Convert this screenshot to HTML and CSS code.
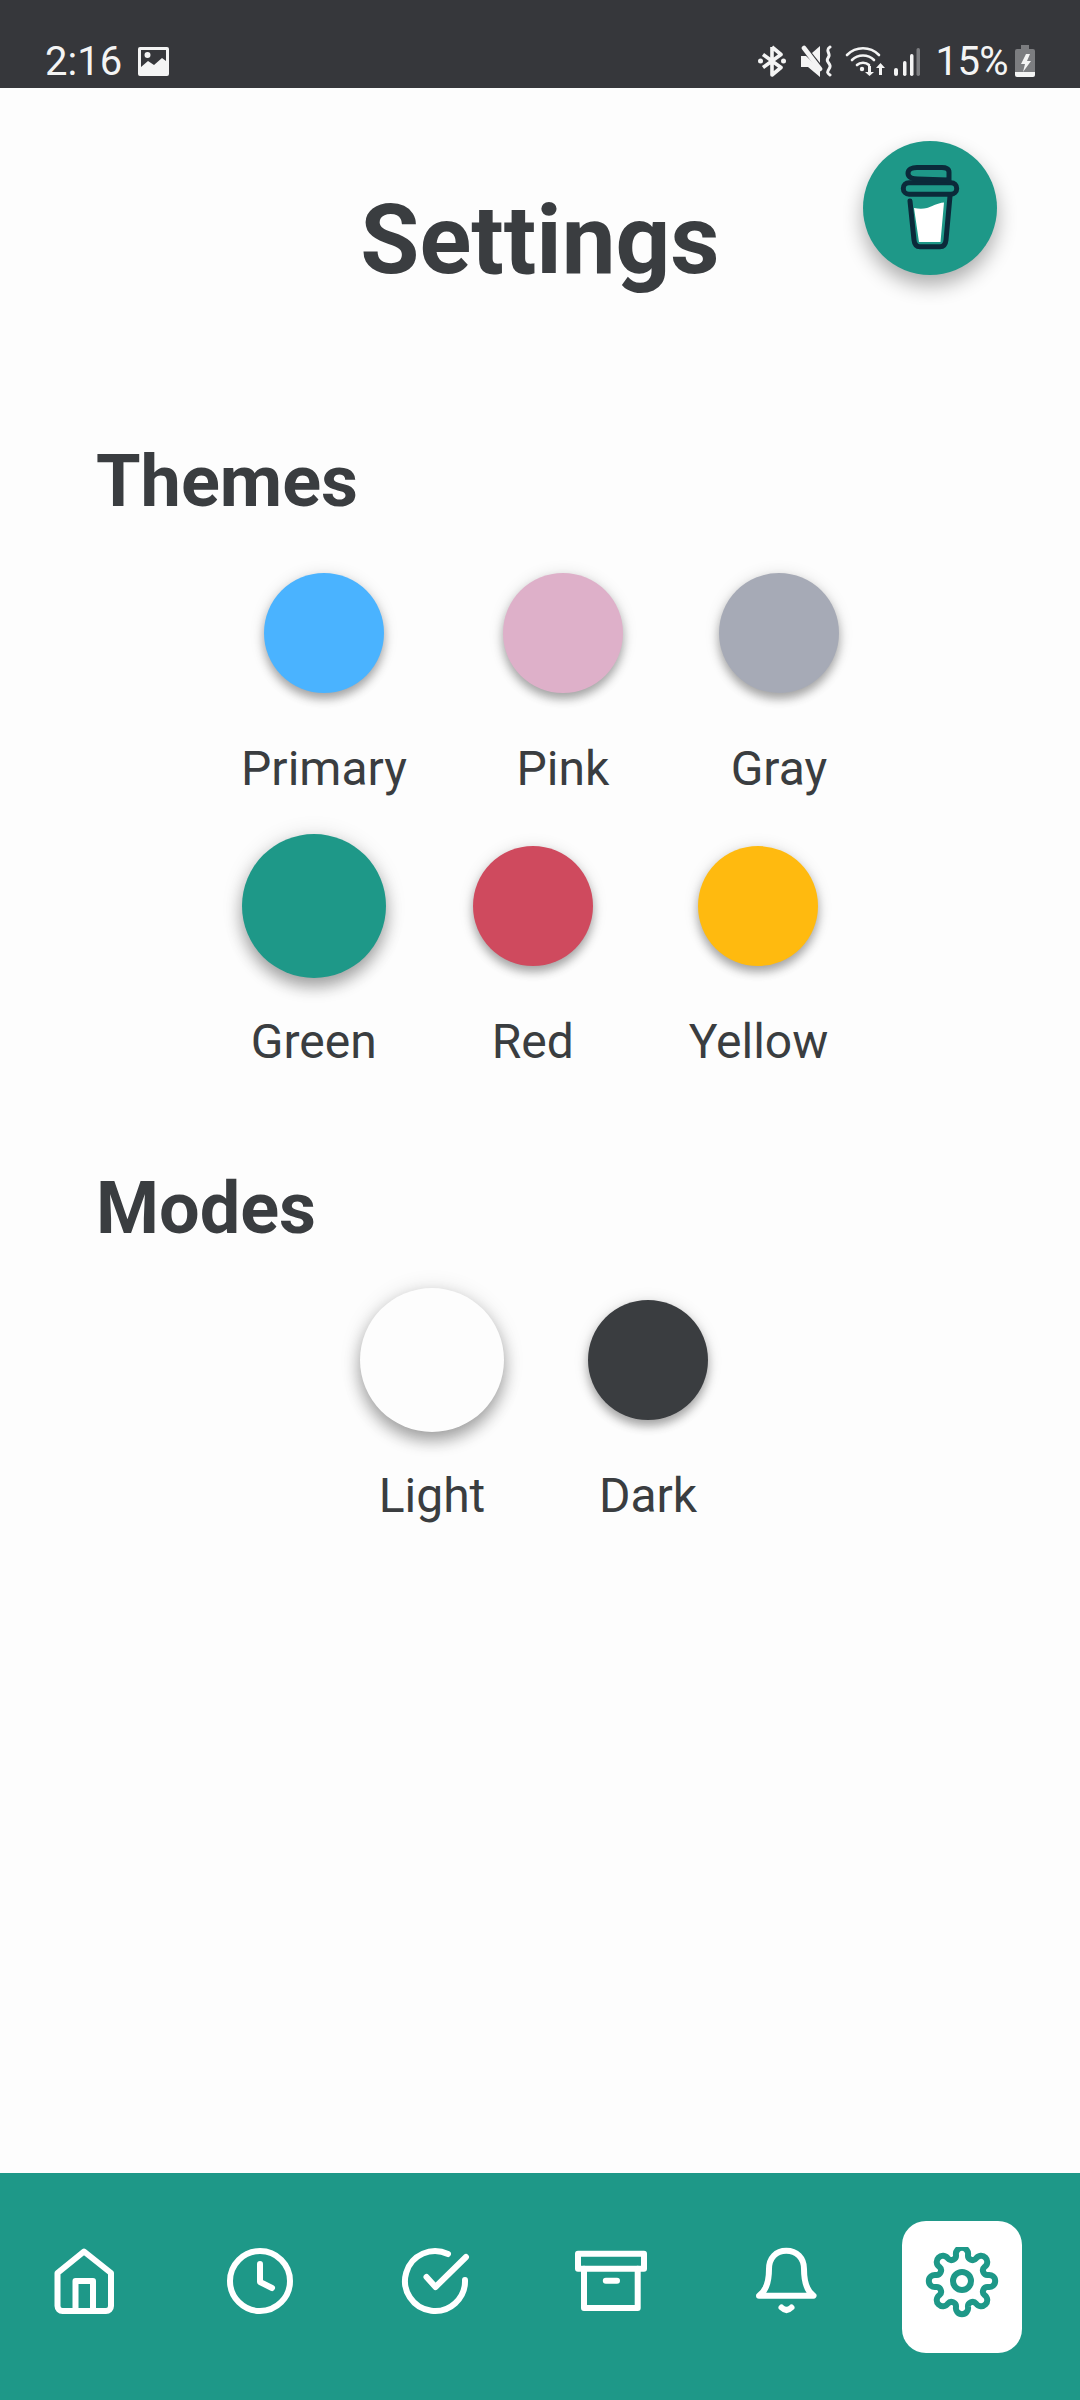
FILE: index.html
```html
<!DOCTYPE html>
<html lang="en">
<head>
<meta charset="utf-8">
<title>Settings</title>
<link rel="stylesheet" href="styles.css">
</head>
<body>
<div class="app">
  <header class="status">
    <div class="status-left">
      <span class="clock">2:16</span>
      <svg class="st-img" viewBox="0 0 31 29"><path fill="#f4f4f4" fill-rule="evenodd" d="M2 0h27a2 2 0 0 1 2 2v25a2 2 0 0 1-2 2H2a2 2 0 0 1-2-2V2a2 2 0 0 1 2-2zM3 3v17l7-6 6 4 8-7 4 3V3zM9.500 5a3 3 0 1 1 0 6 3 3 0 0 1 0-6z"/></svg>
    </div>
    <div class="status-right">
      <svg class="st-bt" viewBox="0 0 28 32"><path fill="none" stroke="#f4f4f4" stroke-width="3.6" stroke-linejoin="round" d="M14 2v28l9-7.500L5 9.500M14 2l9 7.500L5 22.500"/><circle cx="2.500" cy="16" r="2.500" fill="#f4f4f4"/><circle cx="25.500" cy="16" r="2.500" fill="#f4f4f4"/></svg>
      <svg class="st-mute" viewBox="0 0 31 32"><path fill="#f4f4f4" d="M0 11h5l14 13v8L7 22H0z"/><path fill="#f4f4f4" d="M11 8l8-7v17z"/><path fill="none" stroke="#f4f4f4" stroke-width="4.600" stroke-linecap="round" d="M3 3l16 21"/><path fill="none" stroke="#f4f4f4" stroke-width="3" stroke-linecap="round" d="M29 2c-5 3 0 6-1 9s-3 3-1 6 3 4 1 7-2 4 1 6"/></svg>
      <svg class="st-wifi" viewBox="0 0 40 30"><g fill="none" stroke="#f4f4f4" stroke-width="2.600" stroke-linecap="round"><path d="M2 9c9-9 23-9 32 0"/><path d="M7 14c6-6 16-6 22 0"/><path d="M12 19c3-3 9-3 12 0"/></g><circle cx="17" cy="23" r="2.200" fill="#f4f4f4"/><path fill="#f4f4f4" d="M23 20h3v6h3l-4.500 4-4.500-4h3zM35.500 17l4.500 5h-3v7h-3v-7h-3z"/></svg>
      <svg class="st-sig" viewBox="0 0 26 28"><rect x="0" y="20" width="4" height="8" rx="2" fill="#f4f4f4"/><rect x="9" y="13" width="3.500" height="15" rx="1.700" fill="#f4f4f4"/><rect x="16" y="6" width="3.500" height="22" rx="1.700" fill="#f4f4f4"/><rect x="22.500" y="0" width="3.500" height="28" rx="1.700" fill="#7c7d80"/></svg>
      <span class="pct">15%</span>
      <svg class="st-bat" viewBox="0 0 20 32"><path fill="#7c7d80" d="M6 0h8v4h4a2 2 0 0 1 2 2v21H0V6a2 2 0 0 1 2-2h4z"/><path fill="#f4f4f4" d="M0 27h20v3a2 2 0 0 1-2 2H2a2 2 0 0 1-2-2z"/><path fill="#f4f4f4" d="M11 9h4l-3 7h4l-8 11 2-8H6z"/></svg>
    </div>
  </header>

  <main class="content">
    <button class="coffee" aria-label="Buy me a coffee">
      <svg viewBox="0 0 134 134" class="cup">
        <path fill="#fff" d="M51 67c5 1 9 1 13 0s10-5 17-5.500L77.500 101H56z"/>
        <path fill="none" stroke="#0b2a3a" stroke-width="5" stroke-linecap="round" stroke-linejoin="round" d="M47 60l4 39c.4 4 2.500 6.700 6 6.700h20c3.500 0 5.600-2.700 6-6.700l4-44"/>
        <rect x="40.300" y="41.700" width="53.400" height="11.500" rx="5.700" fill="none" stroke="#0b2a3a" stroke-width="5"/>
        <path fill="none" stroke="#0b2a3a" stroke-width="5" stroke-linecap="round" stroke-linejoin="round" d="M86 41V31c0-3-3-4.500-7-4.500H54c-5 0-9 2-9 5.700s4 5.800 10 5.800l30 1"/>
      </svg>
    </button>
    <h1 class="title">Settings</h1>

    <section class="section themes">
      <h2 class="heading">Themes</h2>
      <div class="row row-a">
        <div class="swatch"><span class="dot blue"></span><span class="label">Primary</span></div>
        <div class="swatch"><span class="dot pink"></span><span class="label">Pink</span></div>
        <div class="swatch"><span class="dot gray"></span><span class="label">Gray</span></div>
      </div>
      <div class="row row-b">
        <div class="swatch"><span class="dot green big"></span><span class="label">Green</span></div>
        <div class="swatch tight"><span class="dot red"></span><span class="label">Red</span></div>
        <div class="swatch"><span class="dot yellow"></span><span class="label">Yellow</span></div>
      </div>
    </section>

    <section class="section modes">
      <h2 class="heading">Modes</h2>
      <div class="row row-c">
        <div class="swatch"><span class="dot white big"></span><span class="label">Light</span></div>
        <div class="swatch"><span class="dot dark"></span><span class="label">Dark</span></div>
      </div>
    </section>
  </main>

  <nav class="tabs">
    <a class="tab">
      <svg class="ico" viewBox="0 0 80 80"><g class="line"><path d="M13.500 26L40 4.500 67 26v33a5 5 0 0 1-5 5H18.500a5 5 0 0 1-5-5z"/><path d="M31.500 64V34H49v30"/></g></svg>
    </a>
    <a class="tab">
      <svg class="ico" viewBox="0 0 80 80"><g class="line"><circle cx="40" cy="34" r="30"/><path d="M40 17v18l12 6"/></g></svg>
    </a>
    <a class="tab">
      <svg class="ico" viewBox="0 0 80 80"><g class="line"><path d="M53 7A30 30 0 1 0 70 33"/><path d="M31.500 30l9 10L71 10"/></g></svg>
    </a>
    <a class="tab">
      <svg class="ico" viewBox="0 0 80 80"><g class="line"><path d="M7 6.700h66v15H7z"/><path d="M13 21.700V61h53.700V21.700"/><path d="M34.800 33.700H46"/></g></svg>
    </a>
    <a class="tab">
      <svg class="ico" viewBox="0 0 80 80"><g class="line"><path d="M13 48.700C20 44 23 34 23 22 23 11 30 3.700 40.300 3.700S58 11 58 22c0 12 3 22 9.500 26.700z"/><path d="M35.500 60.500q5 5 10 0"/></g></svg>
    </a>
    <a class="tab active">
      <svg class="ico" viewBox="0 0 80 80"><g class="line gear"><circle cx="40" cy="34" r="9"/><path d="M66 28A6.100 6.100 0 1 1 66 40A4.600 4.600 0 0 0 62.630 48.140A6.100 6.100 0 1 1 54.140 56.630A4.600 4.600 0 0 0 46 60A6.100 6.100 0 1 1 34 60A4.600 4.600 0 0 0 25.860 56.630A6.100 6.100 0 1 1 17.370 48.140A4.600 4.600 0 0 0 14 40A6.100 6.100 0 1 1 14 28A4.600 4.600 0 0 0 17.370 19.860A6.100 6.100 0 1 1 25.860 11.370A4.600 4.600 0 0 0 34 8A6.100 6.100 0 1 1 46 8A4.600 4.600 0 0 0 54.140 11.370A6.100 6.100 0 1 1 62.630 19.860A4.600 4.600 0 0 0 66 28z"/></g></svg>
    </a>
  </nav>
</div>
</body>
</html>
```
FILE: styles.css
```css
* { box-sizing: border-box; }
html, body { margin: 0; padding: 0; }
body { font-family: Roboto, "Liberation Sans", sans-serif; background: #fdfdfd; }
.app { width: 1080px; height: 2400px; display: flex; flex-direction: column; overflow: hidden; }

.status { height: 88px; background: #36373b; color: #f4f4f4; display: flex; justify-content: space-between; align-items: flex-end; padding: 0 45px 4px 45px; flex: none; }
.status-left { display: flex; align-items: center; gap: 16px; }
.clock { font-size: 40px; line-height: 44px; font-weight: 400; }
.st-img { width: 31px; height: 29px; margin-top: -2px; }
.status-right { display: flex; align-items: center; }
.st-bt { width: 28px; height: 32px; margin-right: 15px; margin-top: -3px; }
.st-mute { width: 31px; height: 32px; margin-right: 13px; margin-top: -3px; }
.st-wifi { width: 40px; height: 30px; margin-right: 9px; margin-top: -3px; }
.st-sig { width: 26px; height: 28px; margin-right: 16px; margin-top: -1px; }
.pct { font-size: 40px; line-height: 44px; margin-right: 7px; letter-spacing: -.6px; }
.st-bat { width: 20px; height: 32px; margin-top: -3px; }

.content { flex: 1; position: relative; padding-top: 96px; background: #fdfdfd; }
.coffee { position: absolute; top: 53px; left: 863px; width: 134px; height: 134px; border: 0; padding: 0; border-radius: 50%; background: #1e9888; box-shadow: 0 10px 20px rgba(0,0,0,.32); }
.cup { display: block; width: 134px; height: 134px; }
.title { margin: 0; text-align: center; font-size: 96px; line-height: 112px; font-weight: 700; color: #3a3d40; }
.section { padding: 0 96px; }
.themes { margin-top: 144px; }
.modes { margin-top: 97px; }
.heading { margin: 0; font-size: 72px; line-height: 84px; font-weight: 700; color: #3a3d40; }
.row { display: flex; justify-content: center; gap: 96px; margin-top: 37px; }
.row-b { padding-right: 10px; }
.row-c { gap: 84px; padding-right: 12px; }
.tight { margin-left: -9px; }
.swatch { display: flex; flex-direction: column; align-items: center; }
.dot { display: block; width: 120px; height: 120px; margin: 12px 0; border-radius: 50%; box-shadow: 0 6px 10px rgba(0,0,0,.3), 0 1px 16px rgba(0,0,0,.12); }
.dot.big { width: 144px; height: 144px; margin: 0; box-shadow: 0 9px 16px rgba(0,0,0,.32), 0 1px 22px rgba(0,0,0,.12); }
.label { margin-top: 36px; font-size: 48px; line-height: 56px; color: #3a3d40; }
.blue { background: #4ab3ff; }
.pink { background: #deb0c9; }
.gray { background: #a6aab6; }
.green { background: #1e9888; }
.red { background: #cf4a5e; }
.yellow { background: #ffba0f; }
.white { background: #fdfdfd; }
.dark { background: #3a3d40; }

.tabs { height: 227px; flex: none; background: #1e9888; display: flex; align-items: center; justify-content: space-between; padding: 0 58px 0 24px; }
.tab { width: 120px; height: 132px; display: flex; align-items: center; justify-content: center; }
.tab.active { background: #fff; border-radius: 24px; }
.ico { width: 80px; height: 80px; display: block; }
.line { fill: none; stroke: #fff; stroke-width: 6; stroke-linecap: round; stroke-linejoin: round; }
.line.gear { stroke: #1e9888; }
```
